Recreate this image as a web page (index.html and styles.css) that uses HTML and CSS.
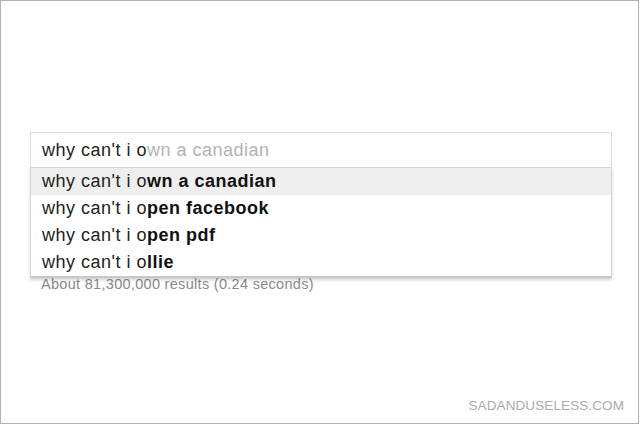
FILE: index.html
```html
<!DOCTYPE html>
<html>
<head>
<meta charset="utf-8">
<link rel="stylesheet" href="styles.css">
</head>
<body>
<div class="frame">
  <div class="search">
    <div class="input"><span class="typed">why can't i o</span><span class="hint">wn a canadian</span></div>
    <div class="menu">
      <div class="item active">why can't i o<b>wn a canadian</b></div>
      <div class="item">why can't i o<b>pen facebook</b></div>
      <div class="item">why can't i o<b>pen pdf</b></div>
      <div class="item">why can't i o<b>llie</b></div>
    </div>
  </div>
  <div class="stats">About 81,300,000 results (0.24 seconds)</div>
  <div class="spacer"></div>
  <div class="mark">SADANDUSELESS.COM</div>
</div>
</body>
</html>
```
FILE: styles.css
```css
html, body {
  margin: 0;
  padding: 0;
  background: #ffffff;
}
.frame {
  box-sizing: border-box;
  width: 639px;
  height: 424px;
  border: 1px solid #b0b0b0;
  display: flex;
  flex-direction: column;
  padding: 131px 0 0 29px;
  font-family: "Liberation Sans", Arial, sans-serif;
}
.search {
  position: relative;
  width: 582px;
}
.input {
  box-sizing: border-box;
  height: 35px;
  border: 1px solid #dcdcdc;
  border-bottom: none;
  padding: 7px 0 0 11px;
  font-size: 18px;
  line-height: 21px;
  letter-spacing: 0.5px;
  color: #222;
}
.hint {
  color: #b3b3b3;
}
.menu {
  position: absolute;
  left: 0;
  right: 0;
  top: 35px;
  background: #fff;
  border: 1px solid #d6d6d6;
  border-bottom: 2px solid #c8c8c8;
  box-shadow: 0 2px 3px rgba(0, 0, 0, 0.18);
}
.item {
  box-sizing: border-box;
  height: 27px;
  padding: 3px 0 0 11px;
  font-size: 18px;
  line-height: 21px;
  letter-spacing: 0.5px;
  color: #222;
}
.item b {
  color: #111;
}
.item.active {
  background: #eeeeee;
}
.stats {
  margin: 108px 0 0 11px;
  font-size: 14.5px;
  line-height: 18px;
  letter-spacing: 0.3px;
  color: #8a8a8a;
}
.spacer {
  flex: 1;
}
.mark {
  align-self: flex-end;
  margin: 0 14px 9px 0;
  font-size: 13.5px;
  line-height: 16px;
  letter-spacing: 0.1px;
  color: #ababab;
}
```
